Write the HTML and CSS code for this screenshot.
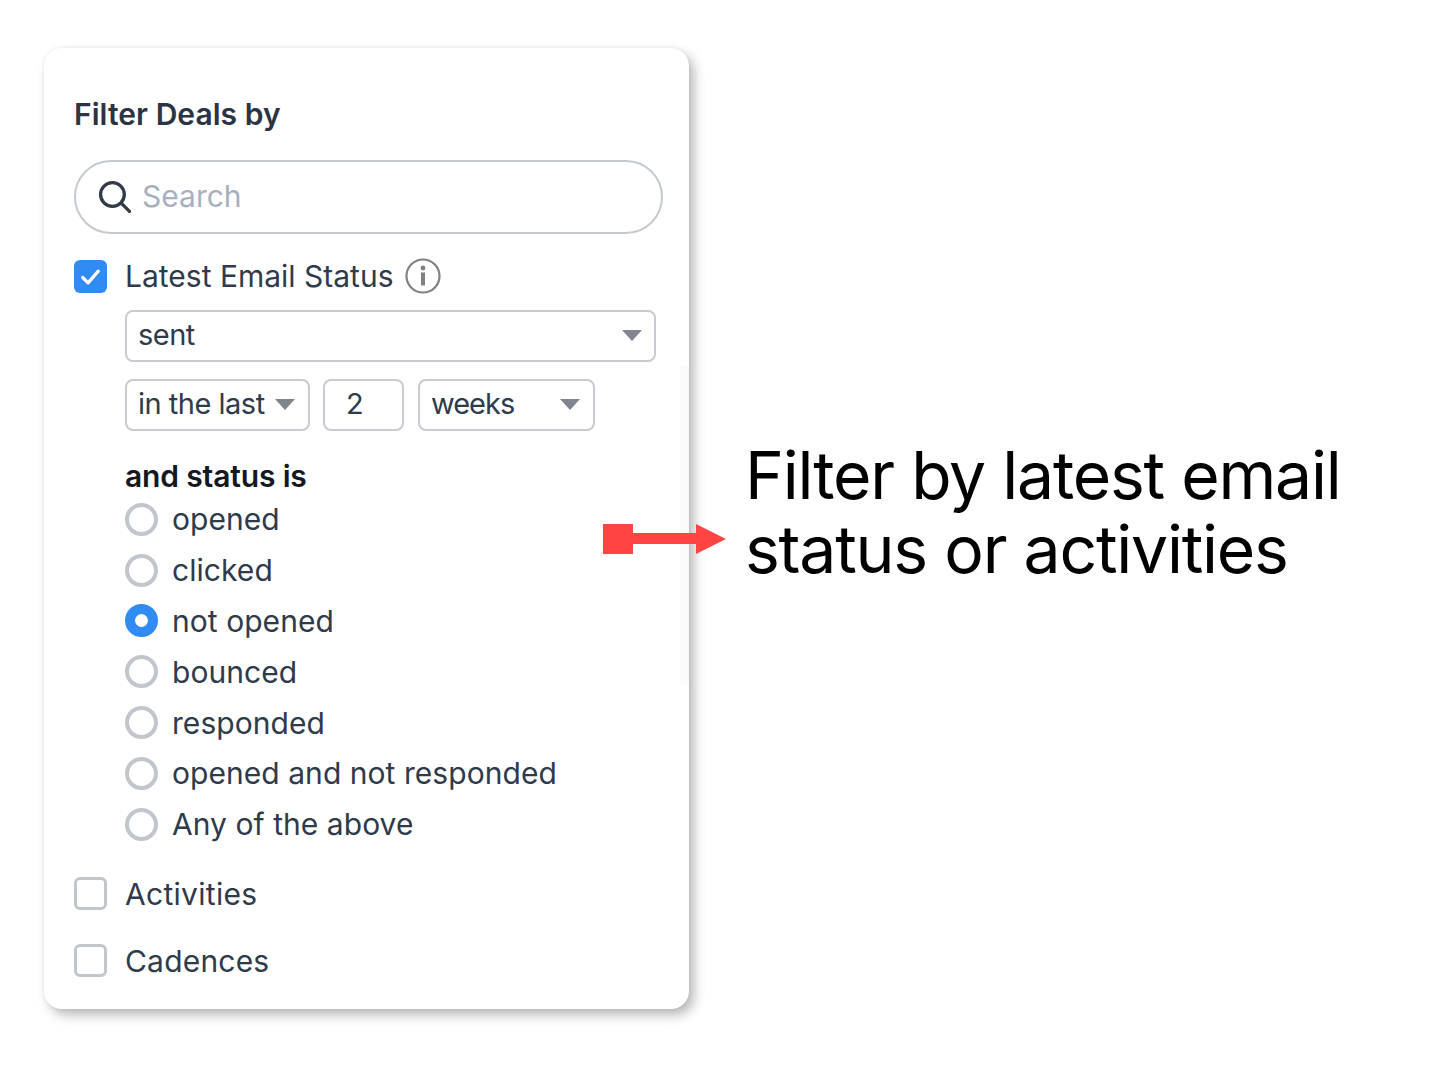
FILE: index.html
```html
<!DOCTYPE html>
<html lang="en">
<head>
<meta charset="utf-8">
<title>Filter Deals by</title>
<link rel="stylesheet" href="styles.css">
</head>
<body>
<main class="page">
  <section class="card">
    <h2 class="title">Filter Deals by</h2>
    <div class="search">
      <svg class="search-icon" viewBox="0 0 32 32" width="33" height="33"><circle cx="14" cy="14" r="11.5" fill="none" stroke="#333b47" stroke-width="3.2"/><path d="M22.5 22.5l8 8" stroke="#333b47" stroke-width="3.2" stroke-linecap="round"/></svg>
      <span class="placeholder">Search</span>
    </div>
    <div class="check-row first">
      <span class="box checked"><svg viewBox="0 0 34 34" width="34" height="34"><path d="M9 18l5.5 5.5L25 11.5" fill="none" stroke="#fff" stroke-width="3.4" stroke-linecap="round" stroke-linejoin="round"/></svg></span>
      <span class="label">Latest Email Status</span>
      <svg class="info" viewBox="0 0 36 36" width="36" height="36"><circle cx="18" cy="18" r="16.5" fill="none" stroke="#7f8184" stroke-width="2.2"/><circle cx="18" cy="10" r="2.4" fill="#7f8184"/><rect x="16" y="14.5" width="4" height="13" fill="#7f8184"/></svg>
    </div>
    <div class="fields">
      <div class="field wide"><span>sent</span><i class="caret"></i></div>
      <div class="field-row">
        <div class="field f-last"><span>in the last</span><i class="caret"></i></div>
        <div class="field f-num"><span>2</span></div>
        <div class="field f-unit"><span>weeks</span><i class="caret"></i></div>
      </div>
      <h3 class="status-head">and status is</h3>
      <ul class="radios">
        <li><i class="radio"></i>opened</li>
        <li><i class="radio"></i>clicked</li>
        <li><i class="radio on"></i>not opened</li>
        <li><i class="radio"></i>bounced</li>
        <li><i class="radio"></i>responded</li>
        <li><i class="radio"></i>opened and not responded</li>
        <li><i class="radio"></i>Any of the above</li>
      </ul>
    </div>
    <div class="check-row act"><span class="box"></span><span class="label">Activities</span></div>
    <div class="check-row cad"><span class="box"></span><span class="label">Cadences</span></div>
    <div class="scroll-track"></div>
  </section>
  <svg class="arrow" viewBox="0 0 123 30" width="123" height="30"><rect x="0" y="0" width="30" height="30" fill="#ff4444"/><rect x="30" y="9" width="64" height="11" fill="#ff4444"/><path d="M93 0l30 15-30 15z" fill="#ff4444"/></svg>
  <p class="callout">Filter by latest email<br>status or activities</p>
</main>
</body>
</html>
```
FILE: styles.css
```css
* { box-sizing: border-box; }
html, body { margin: 0; background: #fff; }
body { font-family: Inter, "Noto Sans", sans-serif; color: #2f3a4b; }
.page { position: relative; width: 1453px; height: 1078px; padding: 48px 0 0 44px; display: flex; align-items: flex-start; }
.card { position: relative; width: 645px; height: 961px; border-radius: 18px; background: #fff; padding: 47px 26px 0 30px; box-shadow: 5px 6px 12px rgba(0,0,0,.28), 0 0 4px rgba(0,0,0,.06); }
.title { margin: 0; font-size: 30px; line-height: 38px; font-weight: 600; color: #2c3443; letter-spacing: 0.05px; }
.search { margin-top: 27px; height: 74px; width: 589px; border: 2px solid #c5cad1; border-radius: 37px; display: flex; align-items: center; padding: 0 0 2px 22px; gap: 11px; }
.placeholder { font-size: 30px; color: #a8b0bf; letter-spacing: 0; }
.check-row { display: flex; align-items: center; height: 36px; font-size: 30px; }
.first { margin-top: 24px; }
.box { width: 33px; height: 33px; border: 3px solid #c1c6cd; border-radius: 6px; flex: none; margin-right: 19px; }
.box.checked { background: #308cf2; border: 0; }
.box svg { display: block; width: 33px; height: 33px; }
.label { letter-spacing: 0; margin-left: -1px; }
.info { margin-left: 12px; }
.fields { margin-left: 51px; margin-top: 16px; }
.field { height: 52px; border: 2px solid #c8ccd2; border-radius: 8px; display: flex; align-items: center; justify-content: space-between; padding: 0 12px 3px 11px; font-size: 29px; letter-spacing: -0.5px; }
.wide { width: 531px; }
.field-row { display: flex; margin-top: 17px; }
.f-last { width: 185px; padding-right: 13px; padding-bottom: 4px; }
.f-num { width: 81px; margin-left: 13px; justify-content: flex-start; padding-left: 21px; padding-bottom: 4px; }
.f-unit { width: 177px; margin-left: 14px; padding-right: 13px; padding-bottom: 4px; }
.f-unit span { letter-spacing: -1px; }
.caret { width: 0; height: 0; border-left: 10px solid transparent; border-right: 10px solid transparent; border-top: 11px solid #80848d; margin-top: 2px; }
.status-head { margin: 26px 0 0; font-size: 30px; line-height: 38px; font-weight: 600; color: #14181f; letter-spacing: -0.15px; }
.radios { list-style: none; margin: -1px 0 0; padding: 0; }
.radios li { height: 50.8px; display: flex; align-items: center; font-size: 30px; letter-spacing: 0.05px; }
.radio { width: 33px; height: 33px; border-radius: 50%; border: 4px solid #c1c6cd; margin-right: 14px; flex: none; }
.radio.on { border: 10px solid #308cf2; }
.act { margin-top: 26px; }
.act .label { letter-spacing: 0.3px; }
.cad { margin-top: 31px; }
.cad .label { letter-spacing: 0.2px; }
.scroll-track { position: absolute; right: 0; top: 317px; width: 9px; height: 320px; background: #fbfbfb; }
.arrow { position: absolute; left: 603px; top: 524px; }
.callout { position: absolute; left: 745px; top: 438px; margin: 0; font-size: 66px; line-height: 74px; color: #000; letter-spacing: -1.22px; white-space: nowrap; }
```
